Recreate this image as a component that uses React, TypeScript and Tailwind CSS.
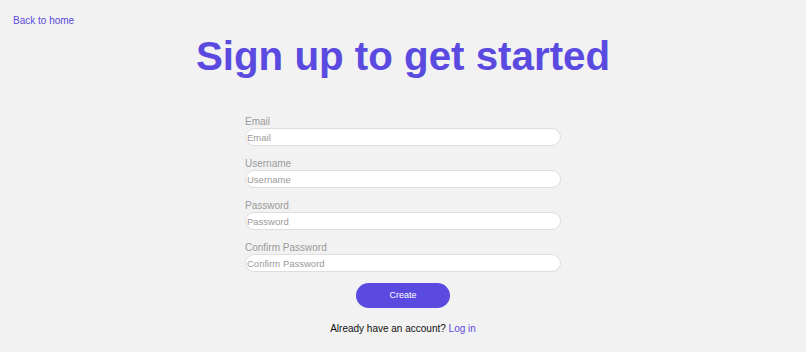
const fields = [
  { label: 'Email', type: 'email' },
  { label: 'Username', type: 'text' },
  { label: 'Password', type: 'password' },
  { label: 'Confirm Password', type: 'password' },
];

export default function App() {
  return (
    <div
      className="min-h-[352px] w-full bg-[#f2f2f2] px-[13px] pt-[15px]"
      style={{ fontFamily: '"Liberation Sans", Arial, sans-serif' }}
    >
      {/* Back link */}
      <a href="#" className="block text-[10px] leading-[12px] text-[#5b4ae0]">
        Back to home
      </a>

      {/* Heading */}
      <h1 className="mt-[6px] text-center text-[40.3px] leading-[48px] font-bold text-[#5b4ae0]">
        Sign up to get started
      </h1>

      {/* Form */}
      <form className="mx-auto mt-[35px] flex w-[316px] flex-col">
        {fields.map((f) => (
          <div key={f.label} className="mb-[12px] flex flex-col">
            <label className="text-[10px] leading-[12px] text-[#9a9a9a]">{f.label}</label>
            <input
              type={f.type}
              placeholder={f.label}
              className="h-[18px] rounded-full border border-[#dedede] bg-white pl-[1px] text-[9.5px] outline-none placeholder:text-[#9a9a9a]"
            />
          </div>
        ))}

        <button
          type="button"
          className="mx-auto mt-[-1px] h-[25px] w-[94px] rounded-full bg-[#5b4ae0] text-[9px] text-white"
        >
          Create
        </button>

        <p className="mt-[15px] text-center text-[10px] leading-[12px] text-[#111]">
          Already have an account? <a href="#" className="text-[#5b4ae0]">Log in</a>
        </p>
      </form>
    </div>
  );
}
